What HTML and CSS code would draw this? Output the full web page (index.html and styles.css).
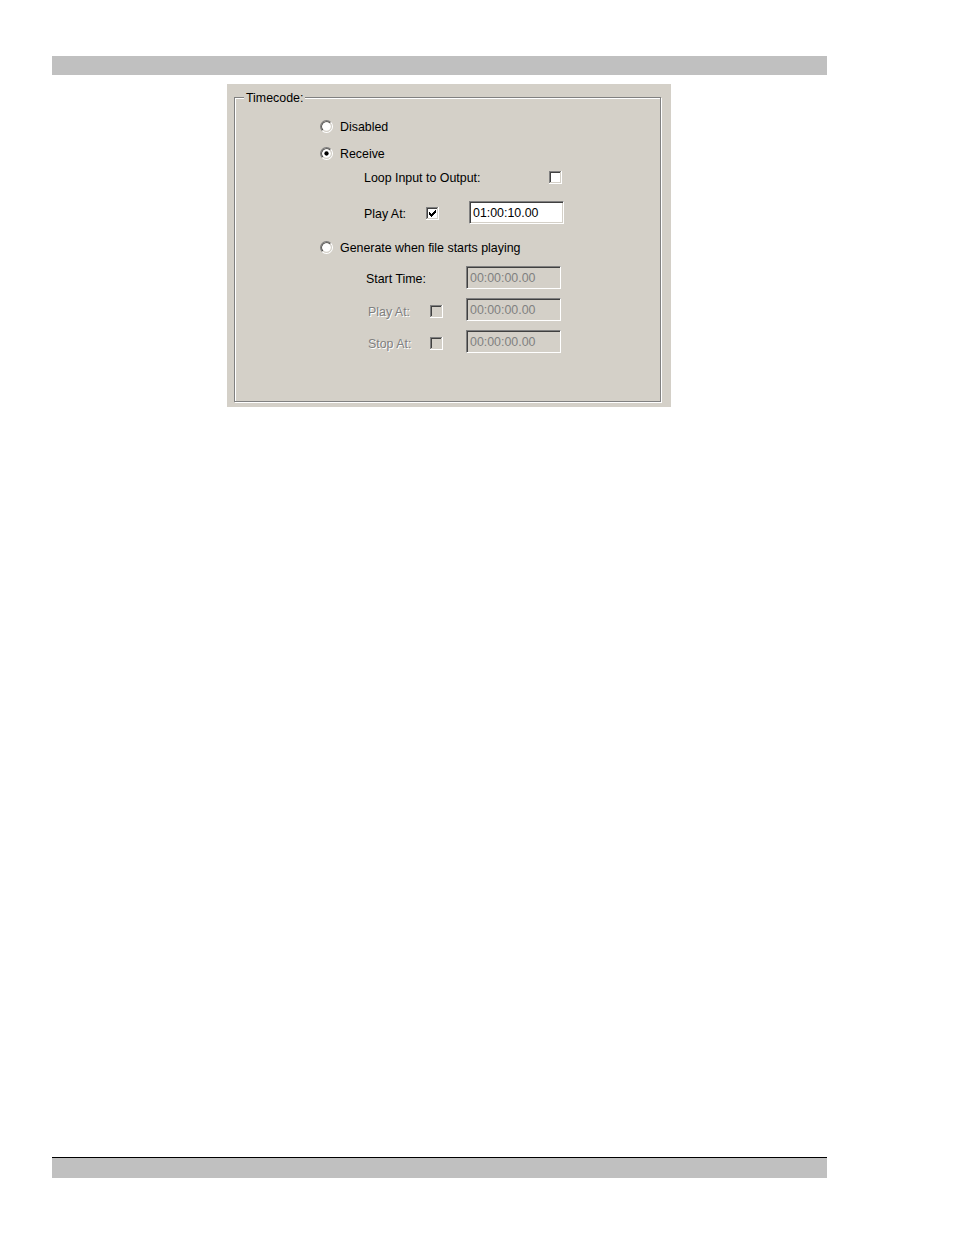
FILE: index.html
```html
<!DOCTYPE html>
<html>
<head>
<meta charset="utf-8">
<link rel="stylesheet" href="styles.css">
</head>
<body>
<div class="page">
  <div class="bar bar-top"></div>
  <div class="panel">
    <div class="groupbox">
      <span class="legend">Timecode:</span>
      <div class="row r1">
        <svg class="radio" width="13" height="13" viewBox="0 0 12 12">
          <path d="M2.11 9.89 A5.5 5.5 0 0 1 9.89 2.11" fill="none" stroke="#808080"/>
          <path d="M9.89 2.11 A5.5 5.5 0 0 1 2.11 9.89" fill="none" stroke="#ffffff"/>
          <path d="M2.82 9.18 A4.5 4.5 0 0 1 9.18 2.82" fill="none" stroke="#404040"/>
          <path d="M9.18 2.82 A4.5 4.5 0 0 1 2.82 9.18" fill="none" stroke="#d4d0c8"/>
          <circle cx="6" cy="6" r="4" fill="#ffffff"/>
        </svg>
        <span class="label rlabel">Disabled</span>
      </div>
      <div class="row r2">
        <svg class="radio" width="13" height="13" viewBox="0 0 12 12">
          <path d="M2.11 9.89 A5.5 5.5 0 0 1 9.89 2.11" fill="none" stroke="#808080"/>
          <path d="M9.89 2.11 A5.5 5.5 0 0 1 2.11 9.89" fill="none" stroke="#ffffff"/>
          <path d="M2.82 9.18 A4.5 4.5 0 0 1 9.18 2.82" fill="none" stroke="#404040"/>
          <path d="M9.18 2.82 A4.5 4.5 0 0 1 2.82 9.18" fill="none" stroke="#d4d0c8"/>
          <circle cx="6" cy="6" r="4" fill="#ffffff"/>
          <circle cx="6" cy="6" r="2" fill="#000000"/>
        </svg>
        <span class="label rlabel">Receive</span>
      </div>
      <div class="row r3">
        <span class="label lbl-loop">Loop Input to Output:</span>
        <svg class="check cb-loop" width="13" height="13" viewBox="0 0 13 13" shape-rendering="crispEdges">
          <rect width="13" height="13" fill="#fff"/>
          <rect width="12" height="1" fill="#808080"/>
          <rect width="1" height="12" fill="#808080"/>
          <rect x="1" y="1" width="10" height="1" fill="#404040"/>
          <rect x="1" y="1" width="1" height="10" fill="#404040"/>
          <rect x="1" y="11" width="11" height="1" fill="#d4d0c8"/>
          <rect x="11" y="1" width="1" height="11" fill="#d4d0c8"/>
        </svg>
      </div>
      <div class="row r4">
        <span class="label lbl-play">Play At:</span>
        <svg class="check cb-play" width="13" height="13" viewBox="0 0 13 13" shape-rendering="crispEdges">
          <rect width="13" height="13" fill="#fff"/>
          <rect width="12" height="1" fill="#808080"/>
          <rect width="1" height="12" fill="#808080"/>
          <rect x="1" y="1" width="10" height="1" fill="#404040"/>
          <rect x="1" y="1" width="1" height="10" fill="#404040"/>
          <rect x="1" y="11" width="11" height="1" fill="#d4d0c8"/>
          <rect x="11" y="1" width="1" height="11" fill="#d4d0c8"/>
          <rect x="3" y="5" width="1" height="3" fill="#000"/>
          <rect x="4" y="6" width="1" height="3" fill="#000"/>
          <rect x="5" y="7" width="1" height="3" fill="#000"/>
          <rect x="6" y="6" width="1" height="3" fill="#000"/>
          <rect x="7" y="5" width="1" height="3" fill="#000"/>
          <rect x="8" y="4" width="1" height="3" fill="#000"/>
          <rect x="9" y="3" width="1" height="3" fill="#000"/>
        </svg>
        <span class="field field-on">01:00:10.00</span>
      </div>
      <div class="row r5">
        <svg class="radio" width="13" height="13" viewBox="0 0 12 12">
          <path d="M2.11 9.89 A5.5 5.5 0 0 1 9.89 2.11" fill="none" stroke="#808080"/>
          <path d="M9.89 2.11 A5.5 5.5 0 0 1 2.11 9.89" fill="none" stroke="#ffffff"/>
          <path d="M2.82 9.18 A4.5 4.5 0 0 1 9.18 2.82" fill="none" stroke="#404040"/>
          <path d="M9.18 2.82 A4.5 4.5 0 0 1 2.82 9.18" fill="none" stroke="#d4d0c8"/>
          <circle cx="6" cy="6" r="4" fill="#ffffff"/>
        </svg>
        <span class="label rlabel">Generate when file starts playing</span>
      </div>
      <div class="row r6">
        <span class="label lbl-start">Start Time:</span>
        <span class="field field-off">00:00:00.00</span>
      </div>
      <div class="row r7">
        <span class="label off lbl-dis">Play At:</span>
        <svg class="check cb-dis" width="13" height="13" viewBox="0 0 13 13" shape-rendering="crispEdges">
          <rect width="13" height="13" fill="#fff"/>
          <rect width="12" height="1" fill="#808080"/>
          <rect width="1" height="12" fill="#808080"/>
          <rect x="1" y="1" width="10" height="1" fill="#404040"/>
          <rect x="1" y="1" width="1" height="10" fill="#404040"/>
          <rect x="1" y="11" width="11" height="1" fill="#d4d0c8"/>
          <rect x="11" y="1" width="1" height="11" fill="#d4d0c8"/>
          <rect x="2" y="2" width="9" height="9" fill="#d4d0c8"/>
        </svg>
        <span class="field field-off">00:00:00.00</span>
      </div>
      <div class="row r8">
        <span class="label off lbl-dis">Stop At:</span>
        <svg class="check cb-dis" width="13" height="13" viewBox="0 0 13 13" shape-rendering="crispEdges">
          <rect width="13" height="13" fill="#fff"/>
          <rect width="12" height="1" fill="#808080"/>
          <rect width="1" height="12" fill="#808080"/>
          <rect x="1" y="1" width="10" height="1" fill="#404040"/>
          <rect x="1" y="1" width="1" height="10" fill="#404040"/>
          <rect x="1" y="11" width="11" height="1" fill="#d4d0c8"/>
          <rect x="11" y="1" width="1" height="11" fill="#d4d0c8"/>
          <rect x="2" y="2" width="9" height="9" fill="#d4d0c8"/>
        </svg>
        <span class="field field-off">00:00:00.00</span>
      </div>
    </div>
  </div>
  <div class="bar bar-bottom"></div>
</div>
</body>
</html>
```

FILE: styles.css
```css
html, body {
  margin: 0;
  padding: 0;
  background: #ffffff;
}

.page {
  width: 954px;
  height: 1235px;
  overflow: hidden;
  font-family: "Liberation Sans", Arial, sans-serif;
  font-size: 12.4px;
  color: #000;
}

.bar {
  width: 775px;
  margin-left: 52px;
  background: #c0c0c0;
}

.bar-top {
  margin-top: 56px;
  height: 19px;
}

.bar-bottom {
  margin-top: 750px;
  height: 20px;
  border-top: 1px solid #000;
}

.panel {
  width: 444px;
  height: 323px;
  margin-left: 227px;
  margin-top: 9px;
  background: #d4d0c8;
  padding: 13px 0 0 7px;
  box-sizing: border-box;
}

.groupbox {
  position: relative;
  width: 427px;
  height: 305px;
  box-sizing: border-box;
  border: 1px solid #808080;
  box-shadow: 1px 1px 0 #ffffff, inset 1px 1px 0 #ffffff;
  display: flex;
  flex-direction: column;
}

.legend {
  position: absolute;
  top: -7px;
  left: 9px;
  padding: 0 2px;
  background: #d4d0c8;
  line-height: 15px;
}

.row {
  display: flex;
  align-items: center;
  height: 18px;
  flex: none;
}

.r1 { margin-top: 19px; }
.r2 { margin-top: 9px; }
.r3 { margin-top: 6px; }
.r4 { margin-top: 15px; height: 23px; }
.r5 { margin-top: 14px; }
.r6 { margin-top: 10px; height: 23px; }
.r7 { margin-top: 9px; height: 23px; }
.r8 { margin-top: 9px; height: 23px; }

.radio {
  display: block;
  margin-left: 85px;
  flex: none;
}

.check {
  display: block;
  flex: none;
}

.label {
  line-height: 18px;
  padding-top: 2px;
  white-space: nowrap;
}

.label.off {
  color: #808080;
  text-shadow: 1px 1px 0 #ffffff;
}

.rlabel { margin-left: 7px; }

.lbl-loop { margin-left: 129px; width: 185px; }
.cb-loop { margin-top: 1px; }

.lbl-play { margin-left: 129px; width: 62px; }
.cb-play { margin-top: 1px; }

.lbl-start { margin-left: 131px; width: 100px; }

.lbl-dis { margin-left: 133px; width: 62px; margin-top: 3px; }
.cb-dis { margin-top: 4px; }

.field {
  display: block;
  box-sizing: border-box;
  width: 95px;
  height: 23px;
  padding-left: 3px;
  padding-top: 2px;
  line-height: 18px;
  border-style: solid;
  border-width: 1px;
  border-color: #808080 #ffffff #ffffff #808080;
  box-shadow: inset 1px 1px 0 #404040, inset -1px -1px 0 #d4d0c8;
  flex: none;
  white-space: nowrap;
}

.field-on {
  background: #ffffff;
  margin-left: 30px;
}

.field-off {
  background: #d4d0c8;
  color: #808080;
}

.r6 .field-off { margin-left: 0; }
.r7 .field-off, .r8 .field-off { margin-left: 23px; }
```
